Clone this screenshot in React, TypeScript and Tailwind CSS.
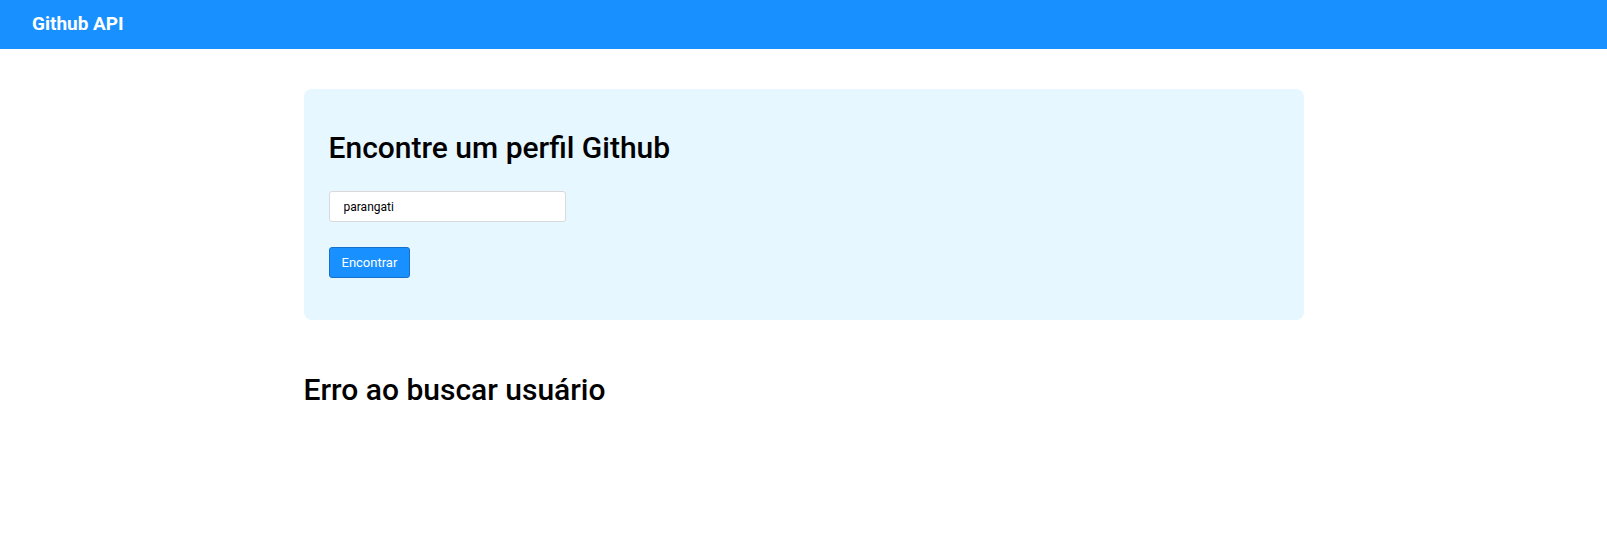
import { useState } from 'react';

export default function App() {
  const [username, setUsername] = useState('parangati');

  return (
    <div className="min-h-screen bg-white font-['Roboto',sans-serif] text-black">
      <header className="h-[49px] bg-[#1890ff] px-8 flex items-center">
        <span className="text-[19px] font-bold text-white">Github API</span>
      </header>

      <main className="max-w-[1000px] mx-auto pt-10">
        <section className="bg-[#e6f7ff] rounded-lg px-[25px] pt-[41px] pb-[42px]">
          <h1 className="text-[30px] leading-[35px] font-medium">Encontre um perfil Github</h1>
          <input
            type="text"
            value={username}
            onChange={(e) => setUsername(e.target.value)}
            className="mt-[26px] block w-[237px] h-[31px] px-[14px] text-xs bg-white border border-[#d9d9d9] rounded-[3px] outline-none"
          />
          <button className="mt-[25px] block h-[31px] px-3 text-[13px] text-white bg-[#1890ff] border border-[#1470c8] rounded-[3px]">
            Encontrar
          </button>
        </section>

        <h2 className="mt-[52px] text-[30px] leading-[35px] font-medium">Erro ao buscar usuário</h2>
      </main>
    </div>
  );
}
